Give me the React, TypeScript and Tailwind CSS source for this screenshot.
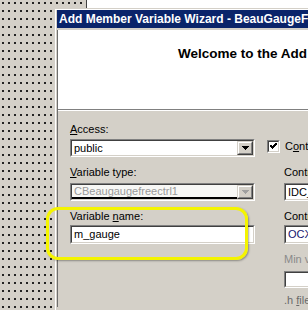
import React from "react";

const Sunken = ({ className = "", inner = "bg-white", children }: { className?: string; inner?: string; children?: React.ReactNode }) => (
    <div className={`border border-t-[#808080] border-l-[#808080] border-b-white border-r-white ${className}`}>
        <div className={`h-full flex items-stretch border border-t-[#404040] border-l-[#404040] border-b-[#d4d0c8] border-r-[#d4d0c8] ${inner}`}>
            {children}
        </div>
    </div>
);

const DropButton = ({ disabled = false }: { disabled?: boolean }) => (
    <div className="w-[16px] h-full border border-t-[#d4d0c8] border-l-[#d4d0c8] border-b-[#404040] border-r-[#404040]">
        <div className="h-full flex items-center justify-center bg-[#d4d0c8] border border-t-white border-l-white border-b-[#808080] border-r-[#808080]">
            <svg width="7" height="4" shapeRendering="crispEdges">
                <g fill={disabled ? "#a0a0a0" : "#000"}>
                    <rect x="0" y="0" width="7" height="1" />
                    <rect x="1" y="1" width="5" height="1" />
                    <rect x="2" y="2" width="3" height="1" />
                    <rect x="3" y="3" width="1" height="1" />
                </g>
            </svg>
        </div>
    </div>
);

const Label = ({ className = "", children }: { className?: string; children: React.ReactNode }) => (
    <div className={`h-[13px] leading-[13px] text-[11px] whitespace-nowrap ${className}`}>{children}</div>
);

export default function App() {
    return (
        <div className="relative w-[308px] h-[310px] overflow-hidden bg-[#d4d0c8] bg-[radial-gradient(circle_at_3px_3px,#222_0.8px,transparent_1px)] bg-size-[6px_8px] font-['Liberation_Sans',Arial,sans-serif] text-black">
            {/* window behind the dialog */}
            <div className="absolute left-[86px] top-0 w-[240px] h-[8px] bg-white border-l border-[#404040]" />

            {/* dialog */}
            <div className="absolute left-[54px] top-[8px] w-[600px] h-[320px] border-l border-t border-[#d4d0c8]">
                <div className="h-full pl-[1px] bg-[#d4d0c8] border-l border-t border-white">
                    <div className="h-[18px] leading-[18px] pl-[2px] bg-[#0a246a] text-white text-[12px] font-bold whitespace-nowrap">
                        Add Member Variable Wizard - BeauGaugeFreeCtrl
                    </div>
                    <div className="mt-[2px] border-l border-[#6e6e6e]">
                        <div className="h-[79px] bg-white pt-[16px] pl-[120px]">
                            <div className="text-[13.5px] font-bold leading-[16px] whitespace-nowrap">
                                Welcome to the Add Member Variable Wizard
                            </div>
                        </div>
                        <div className="h-[2px] border-t border-b border-t-[#808080] border-b-white" />
                        <div className="flex pl-[12px] gap-[29px]">
                            <div className="w-[185px] pt-[12px] flex flex-col">
                                <Label><span className="underline">A</span>ccess:</Label>
                                <Sunken className="mt-[3px] h-[18px]">
                                    <div className="flex-1 pl-[2px] text-[11px] leading-[14px]">public</div>
                                    <DropButton />
                                </Sunken>
                                <Label className="mt-[9px]"><span className="underline">V</span>ariable type:</Label>
                                <Sunken className="mt-[4px] h-[18px]" inner="bg-[#f7f7f5]">
                                    <div className="flex-1 pl-[2px] text-[11px] leading-[12px] text-[#9a9a9a] border-b-2 border-black">CBeaugaugefreectrl1</div>
                                    <DropButton disabled />
                                </Sunken>
                                <Label className="mt-[9px]">Variable <span className="underline">n</span>ame:</Label>
                                <Sunken className="mt-[2px] h-[19px]">
                                    <div className="flex-1 pl-[2px] text-[11px] leading-[15px]">m_gauge</div>
                                </Sunken>
                            </div>
                            <div className="w-[200px] pt-[29px] flex flex-col">
                                <div className="flex items-center gap-[5px] h-[13px] -ml-[17px]">
                                    <Sunken className="w-[13px] h-[13px]">
                                        <svg width="9" height="9" shapeRendering="crispEdges">
                                            <polyline points="1.5,3.5 3.5,5.5 7.5,1.5" fill="none" stroke="#000" strokeWidth="2" />
                                        </svg>
                                    </Sunken>
                                    <Label>C<span className="underline">o</span>ntrol variable</Label>
                                </div>
                                <Label className="mt-[13px]">Control ID:</Label>
                                <Sunken className="mt-[4px] h-[18px]">
                                    <div className="flex-1 pl-[2px] text-[11px] leading-[14px]">IDC_BEAUGAUGEFREECTRL1</div>
                                </Sunken>
                                <Label className="mt-[9px]">Control type:</Label>
                                <Sunken className="mt-[2px] h-[19px]">
                                    <div className="flex-1 pl-[2px] text-[11px] leading-[15px] text-[#14146e]">OCX</div>
                                </Sunken>
                                <Label className="mt-[9px] text-[#8a8a8a]">Min value:</Label>
                                <Sunken className="mt-[5px] h-[17px]" />
                                <Label className="mt-[6px] text-[#6a6a6a]">.h <span className="underline">f</span>ile:</Label>
                            </div>
                        </div>
                    </div>
                </div>
            </div>

            {/* yellow highlight */}
            <div className="absolute left-[46px] top-[207px] w-[202px] h-[53px] rounded-[12px] border-[3px] border-[#f4f400] shadow-[1px_1px_2px_rgba(0,0,0,0.35)]" />
        </div>
    );
}
